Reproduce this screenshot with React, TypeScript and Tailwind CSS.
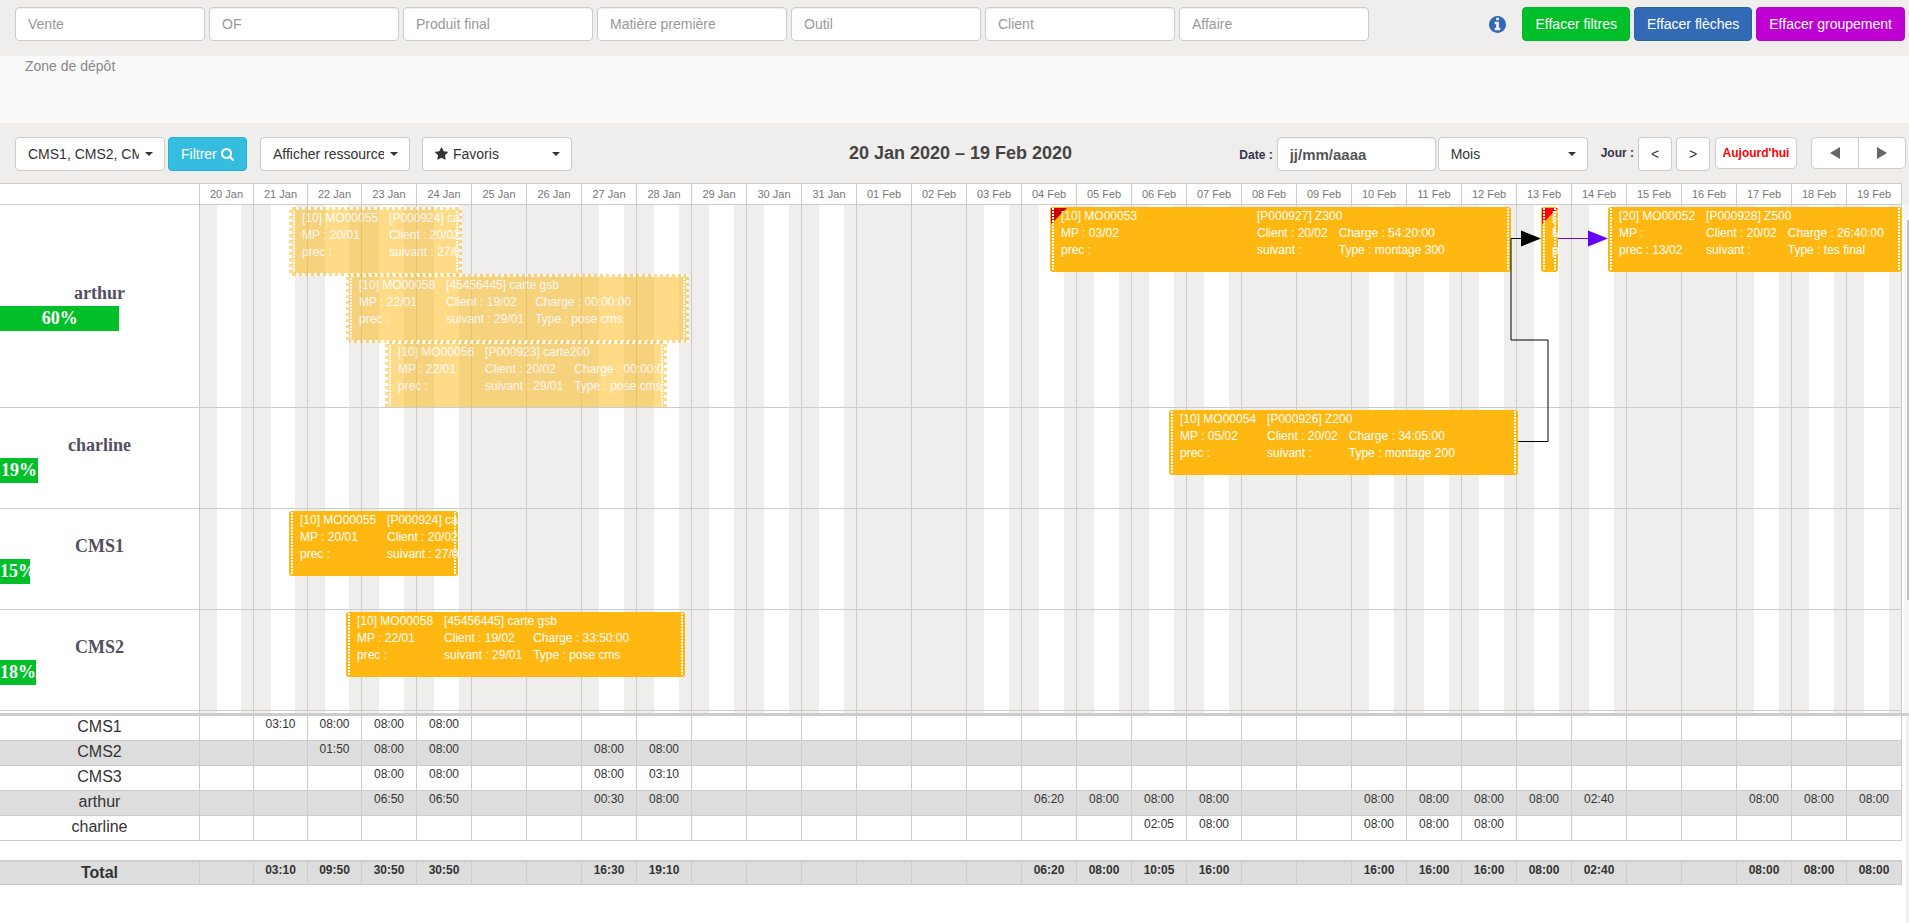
import { useState } from "react";

type Task = {
  from: number;
  to: number;
  top: number;
  ghost?: boolean;
  flag?: string;
  code: string;
  product: string;
  mp: string;
  client: string;
  charge?: string;
  prec: string;
  next: string;
  type?: string;
  cols?: string;
};

type Lane = { name: string; load: number; height: string; tasks: Task[] };

// width of the time axis, in the unit used by the from / to of the tasks
const SPAN = 1703;

const filters = [
  "Vente",
  "OF",
  "Produit final",
  "Matière première",
  "Outil",
  "Client",
  "Affaire",
];

const days = [
  ...Array.from({ length: 12 }, (_, i) => `${20 + i} Jan`),
  ...Array.from({ length: 19 }, (_, i) => `${String(i + 1).padStart(2, "0")} Feb`),
];

// 20 Jan 2020 is a monday
const isWeekend = (i: number) => i % 7 === 5 || i % 7 === 6;

const lanes: Lane[] = [
  {
    name: "arthur",
    load: 60,
    height: "h-[203px]",
    tasks: [
      { from: 90, to: 263, top: 2, ghost: true, code: "[10] MO00055", product: "[P000924] carte", mp: "20/01", client: "20/02", prec: "", next: "27/01" },
      { from: 147, to: 490, top: 69, ghost: true, code: "[10] MO00058", product: "[45456445] carte gsb", mp: "22/01", client: "19/02", charge: "00:00:00", prec: "", next: "29/01", type: "pose cms" },
      { from: 186, to: 468, top: 136, ghost: true, code: "[10] MO00056", product: "[P000923] carte200", mp: "22/01", client: "20/02", charge: "00:00:00", prec: "", next: "29/01", type: "pose cms" },
      { from: 851, to: 1312, top: 2, flag: "fill-[#cc0000]", code: "[10] MO00053", product: "[P000927] Z300", mp: "03/02", client: "20/02", charge: "54:20:00", prec: "", next: "", type: "montage 300", cols: "grid-cols-[185px_auto_auto]" },
      { from: 1342, to: 1359, top: 2, flag: "fill-[#ff0000]", code: "[10] MO00052", product: "[P000928] Z500", mp: "", client: "20/02", prec: "", next: "14/02" },
      { from: 1409, to: 1703, top: 2, code: "[20] MO00052", product: "[P000928] Z500", mp: "", client: "20/02", charge: "26:40:00", prec: "13/02", next: "", type: "tes final" },
    ],
  },
  {
    name: "charline",
    load: 19,
    height: "h-[101px]",
    tasks: [
      { from: 970, to: 1319, top: 2, code: "[10] MO00054", product: "[P000926] Z200", mp: "05/02", client: "20/02", charge: "34:05:00", prec: "", next: "", type: "montage 200" },
    ],
  },
  {
    name: "CMS1",
    load: 15,
    height: "h-[101px]",
    tasks: [
      { from: 90, to: 259, top: 2, code: "[10] MO00055", product: "[P000924] carte", mp: "20/01", client: "20/02", prec: "", next: "27/01" },
    ],
  },
  {
    name: "CMS2",
    load: 18,
    height: "h-[101px]",
    tasks: [
      { from: 147, to: 486, top: 2, code: "[10] MO00058", product: "[45456445] carte gsb", mp: "22/01", client: "19/02", charge: "33:50:00", prec: "", next: "29/01", type: "pose cms" },
    ],
  },
];

// hours by day index
const hours: { name: string; values: Record<number, string> }[] = [
  { name: "CMS1", values: { 1: "03:10", 2: "08:00", 3: "08:00", 4: "08:00" } },
  { name: "CMS2", values: { 2: "01:50", 3: "08:00", 4: "08:00", 7: "08:00", 8: "08:00" } },
  { name: "CMS3", values: { 3: "08:00", 4: "08:00", 7: "08:00", 8: "03:10" } },
  {
    name: "arthur",
    values: {
      3: "06:50", 4: "06:50", 7: "00:30", 8: "08:00", 15: "06:20", 16: "08:00", 17: "08:00", 18: "08:00",
      21: "08:00", 22: "08:00", 23: "08:00", 24: "08:00", 25: "02:40", 28: "08:00", 29: "08:00", 30: "08:00",
    },
  },
  { name: "charline", values: { 17: "02:05", 18: "08:00", 21: "08:00", 22: "08:00", 23: "08:00" } },
];

const totals: Record<number, string> = {
  1: "03:10", 2: "09:50", 3: "30:50", 4: "30:50", 7: "16:30", 8: "19:10", 15: "06:20", 16: "08:00", 17: "10:05",
  18: "16:00", 21: "16:00", 22: "16:00", 23: "16:00", 24: "08:00", 25: "02:40", 28: "08:00", 29: "08:00", 30: "08:00",
};

const icons = {
  search: {
    box: "0 -1536 1664 1792",
    d: "M1152 704q0 -185 -131.5 -316.5t-316.5 -131.5t-316.5 131.5t-131.5 316.5t131.5 316.5t316.5 131.5t316.5 -131.5t131.5 -316.5zM1664 -128q0 -52 -38 -90t-90 -38q-54 0 -90 38l-343 342q-179 -124 -399 -124q-143 0 -273.5 55.5t-225 150t-150 225t-55.5 273.5t55.5 273.5t150 225t225 150t273.5 55.5t273.5 -55.5t225 -150t150 -225t55.5 -273.5q0 -220 -124 -399l343 -343q37 -37 37 -90z",
  },
  star: {
    box: "0 -1536 1664 1792",
    d: "M1664 889q0 -22 -26 -48l-363 -354l86 -500q1 -7 1 -20q0 -21 -10.5 -35.5t-30.5 -14.5q-19 0 -40 12l-449 236l-449 -236q-22 -12 -40 -12q-21 0 -31.5 14.5t-10.5 35.5q0 6 2 20l86 500l-364 354q-25 27 -25 48q0 37 56 46l502 73l225 455q19 41 49 41t49 -41l225 -455l502 -73q56 -9 56 -46z",
  },
  info: {
    box: "0 -1408 1536 1536",
    d: "M1024 160v160q0 14 -9 23t-23 9h-96v512q0 14 -9 23t-23 9h-320q-14 0 -23 -9t-9 -23v-160q0 -14 9 -23t23 -9h96v-320h-96q-14 0 -23 -9t-9 -23v-160q0 -14 9 -23t23 -9h448q14 0 23 9t9 23zM896 1056v160q0 14 -9 23t-23 9h-192q-14 0 -23 -9t-9 -23v-160q0 -14 9 -23t23 -9h192q14 0 23 9t9 23zM1536 640q0 -209 -103 -385.5t-279.5 -279.5t-385.5 -103t-385.5 103t-279.5 279.5t-103 385.5t103 385.5t279.5 279.5t385.5 103t385.5 -103t279.5 -279.5t103 -385.5z",
  },
};

const Icon = ({ name, className }: { name: keyof typeof icons; className: string }) => (
  <svg viewBox={icons[name].box} className={className} aria-hidden="true">
    <path d={icons[name].d} transform="scale(1 -1)" fill="currentColor" fillRule="evenodd" />
  </svg>
);

const Picker = ({ label, options, star }: { label: string; options: string[]; star?: boolean }) => (
  <div className="relative w-[150px]">
    <select
      aria-label={label}
      className={`h-[34px] w-full appearance-none rounded border border-[#ccc] bg-white pr-[25px] text-sm text-[#333] ${star ? "pl-[30px]" : "pl-3"}`}
    >
      {options.map((o) => (
        <option key={o}>{o}</option>
      ))}
    </select>
    {star && <Icon name="star" className="pointer-events-none absolute left-[13px] top-[10px] h-[14px] w-[13px] text-[#333]" />}
    <span className="pointer-events-none absolute right-3 top-[15px] border-x-4 border-t-4 border-x-transparent border-t-[#333]" />
  </div>
);

const Handle = ({ side }: { side: string }) => (
  <span
    className={`absolute inset-y-px w-[2px] bg-[repeating-linear-gradient(to_bottom,white_0_2px,transparent_2px_3px)] ${side}`}
  />
);

const TaskBar = ({ task }: { task: Task }) => (
  <div
    className={`absolute overflow-hidden whitespace-nowrap bg-[#ffb711] text-xs leading-[17px] text-white ${
      task.ghost
        ? "h-[69px] border-[3px] border-dotted border-white pl-[10px] opacity-50"
        : "h-[65px] rounded-[3px] pt-px pl-[11px]"
    }`}
    style={{
      left: `${(task.from / SPAN) * 100}%`,
      width: `${((task.to - task.from) / SPAN) * 100}%`,
      top: task.top,
    }}
  >
    {task.flag && (
      <svg viewBox="0 0 16 16" className={`absolute left-px top-px size-4 ${task.flag}`}>
        <path d="M0 0H16L0 16Z" />
      </svg>
    )}
    <Handle side={task.ghost ? "left-px" : "left-[2px]"} />
    <Handle side={task.ghost ? "right-px" : "right-[2px]"} />
    <div className={`relative grid w-max gap-x-[11px] ${task.cols ?? "grid-cols-[auto_auto_auto]"}`}>
      <span>{task.code}</span>
      <span className="col-span-2">{task.product}</span>
      <span>MP : {task.mp}</span>
      <span>Client : {task.client}</span>
      <span>{task.charge && `Charge : ${task.charge}`}</span>
      <span>prec : {task.prec}</span>
      <span>suivant : {task.next}</span>
      <span>{task.type && `Type : ${task.type}`}</span>
    </div>
  </div>
);

const dayGrid = "grid grid-cols-[repeat(3,54fr)_repeat(28,55fr)] border-r border-[#ccc]";

const Links = () => (
  <svg
    viewBox="0 0 1703 508"
    preserveAspectRatio="none"
    className="pointer-events-none absolute left-0 top-0 h-[508px] w-full"
  >
    <path d="M1319 236.5H1349V135H1312V33.5H1322" fill="none" stroke="#000" />
    <path d="M1322 25.5L1342 33.5L1322 41.5Z" />
    <path d="M1359 33.5H1389" stroke="#6600ff" />
    <path d="M1389 25.5L1409 33.5L1389 41.5Z" fill="#6600ff" />
  </svg>
);

const HoursTable = () => {
  const cell = "border-b border-l border-[#ccc] p-0 text-center align-top text-xs leading-[17px] last:border-r";

  return (
    <table className="w-full table-fixed border-separate border-spacing-0 text-[#333]">
      <colgroup>
        <col className="w-[199px]" />
        {days.map((d, i) => (
          <col key={d} className={i < 3 ? "w-[54px]" : i < 30 ? "w-[55px]" : "w-[56px]"} />
        ))}
      </colgroup>
      <tbody>
        {hours.map((row) => (
          <tr key={row.name} className="h-[25px] even:bg-[#ddd]">
            <th scope="row" className="border-b border-[#ccc] p-0 align-top text-base leading-[22px] font-normal">
              {row.name}
            </th>
            {days.map((d, i) => (
              <td key={d} className={cell}>
                {row.values[i]}
              </td>
            ))}
          </tr>
        ))}
        <tr className="h-[19px]">
          <td colSpan={32} className="p-0" />
        </tr>
        <tr className="h-[25px] bg-[#ddd] font-bold">
          <th scope="row" className="border-t-2 border-b border-[#ccc] p-0 align-top text-base leading-[22px]">
            Total
          </th>
          {days.map((d, i) => (
            <td key={d} className={`${cell} border-t-2`}>
              {totals[i]}
            </td>
          ))}
        </tr>
      </tbody>
    </table>
  );
};

const App = () => {
  const [date, setDate] = useState("");
  const button = "h-[34px] rounded border px-3 text-sm text-white";
  const square = "h-[34px] w-[34px] rounded border border-[#ccc] bg-white text-sm text-[#333]";

  return (
    <div className="flex min-h-screen flex-col bg-white font-['Liberation_Sans',Arial,sans-serif]">
      <header className="flex h-14 items-start gap-1 bg-[#efeeec] pt-[7px] pr-1 pl-[15px]">
        {filters.map((f) => (
          <input
            key={f}
            aria-label={f}
            placeholder={f}
            className="h-[34px] w-[190px] rounded border border-[#ccc] bg-white px-3 text-sm shadow-[inset_0_1px_1px_rgba(0,0,0,0.075)] placeholder:text-[#999]"
          />
        ))}
        <div className="ml-auto flex gap-1">
          <button aria-label="Informations" className="mr-3 text-[#336ab6]">
            <Icon name="info" className="size-[17px]" />
          </button>
          <button className={`${button} border-[#00b927] bg-[#00bf28]`}>Effacer filtres</button>
          <button className={`${button} border-[#2d5fa3] bg-[#336ab6]`}>Effacer flèches</button>
          <button className={`${button} border-[#b800cb] bg-[#bf00d3]`}>Effacer groupement</button>
        </div>
      </header>

      <section className="h-[67px] bg-[#f9f9f9] pl-[25px] text-sm leading-5 text-[#888]">Zone de dépôt</section>

      <div className="grid h-[60px] grid-cols-[1fr_auto_1fr] items-start bg-[#efeeec] pt-[14px] pr-[3px] pl-[15px]">
        <div className="flex">
          <Picker label="Ressources" options={["CMS1, CMS2, CMS3, arthur, charline"]} />
          <button className={`${button} mr-[13px] ml-[3px] flex w-[79px] items-center gap-1 border-[#1fb1d6] bg-[#35bde0]`}>
            Filtrer
            <Icon name="search" className="h-[14px] w-[13px]" />
          </button>
          <Picker label="Affichage" options={["Afficher ressources"]} />
          <div className="w-3" />
          <Picker label="Favoris" options={["Favoris"]} star />
        </div>
        <h1 className="text-lg leading-8 font-bold text-[#444]">20 Jan 2020 – 19 Feb 2020</h1>
        <div className="flex justify-end text-xs font-bold text-[#33334a]">
          <label htmlFor="date" className="mr-1 leading-9">
            Date :
          </label>
          <input
            id="date"
            placeholder="jj/mm/aaaa"
            value={date}
            onChange={(e) => setDate(e.target.value)}
            className="mr-[2px] h-[34px] w-[159px] rounded border border-[#ccc] bg-white px-3 text-[15px] text-[#555] shadow-[inset_0_1px_1px_rgba(0,0,0,0.075)] placeholder:text-[#555]"
          />
          <div className="font-normal">
            <Picker label="Vue" options={["Mois", "Semaine", "Jour"]} />
          </div>
          <span className="mr-1 ml-[13px] leading-8">Jour :</span>
          <div className="flex gap-1 font-normal">
            <button className={square}>&lt;</button>
            <button className={square}>&gt;</button>
          </div>
          <button className="ml-[5px] h-8 w-[82px] rounded-[5px] border border-[#ccc] bg-white text-xs font-bold text-[#ff0000]">
            Aujourd'hui
          </button>
          <div className="ml-[14px] flex h-8 w-[95px] divide-x divide-[#ccc] rounded-[5px] border border-[#ccc] bg-white">
            <button aria-label="Précédent" className="flex flex-1 items-center justify-center">
              <svg viewBox="0 0 10 12" className="h-3 w-[10px] fill-[#666]">
                <path d="M10 0V12L0 6Z" />
              </svg>
            </button>
            <button aria-label="Suivant" className="flex flex-1 items-center justify-center">
              <svg viewBox="0 0 10 12" className="h-3 w-[10px] fill-[#666]">
                <path d="M0 0V12L10 6Z" />
              </svg>
            </button>
          </div>
        </div>
      </div>

      <main className="flex flex-1 flex-col">
        <div className="flex bg-[#efeeec] pr-[7px]">
          <div className="w-[199px] shrink-0 border-y border-[#ccc] bg-white" />
          <div className={`${dayGrid} h-[22px] flex-1 border-y bg-white`}>
            {days.map((d) => (
              <div key={d} className="border-l border-[#ccc] text-center text-[11px] leading-5 text-[#777]">
                {d}
              </div>
            ))}
          </div>
        </div>

        <div className="relative flex h-[508px] overflow-hidden bg-white pr-[7px]">
          <div className="w-[199px] shrink-0 text-center font-['Liberation_Serif','Times_New_Roman',serif] text-lg leading-6 font-bold">
            {lanes.map((l) => (
              <div key={l.name} className={`${l.height} flex flex-col justify-center border-b border-[#ccc]`}>
                <div className="h-[25px] text-[#544f60]">{l.name}</div>
                <div className="h-[25px] overflow-hidden bg-[#00bf28] text-white" style={{ width: `${l.load}%` }}>
                  {l.load}%
                </div>
              </div>
            ))}
          </div>
          <div className="relative flex-1">
            <div className={`${dayGrid} absolute inset-0`}>
              {days.map((d, i) => (
                <div key={d} className="border-l border-[#ccc] bg-[#efeeec]">
                  {!isWeekend(i) && <div className="ml-[32%] h-full w-[45%] bg-white" />}
                </div>
              ))}
            </div>
            <div className="absolute inset-0">
              {lanes.map((l) => (
                <div key={l.name} className={`${l.height} relative overflow-hidden border-b border-[#ccc]`}>
                  {l.tasks.map((t) => (
                    <TaskBar key={t.code + t.from} task={t} />
                  ))}
                </div>
              ))}
              <Links />
            </div>
          </div>
          <div className="absolute inset-y-0 right-0 w-[5px] bg-[#f5f5f5]" />
          <div className="absolute top-[15px] right-0 h-[380px] w-[2px] bg-[#c1c1c1]" />
        </div>

        <div className="flex flex-1 border-t-[3px] border-[#ccc]">
          <div className="flex-1 pr-1">
            <HoursTable />
          </div>
          <div className="w-[3px] bg-[#f1f1f1]" />
        </div>
      </main>
    </div>
  );
};

export default App;
